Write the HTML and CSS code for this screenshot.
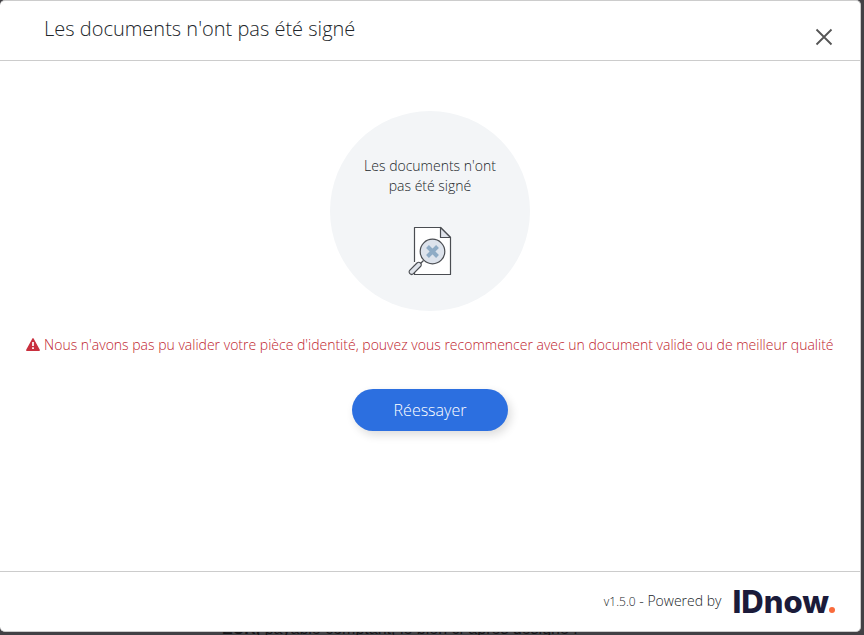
FILE: index.html
```html
<!DOCTYPE html>
<html lang="fr">
<head>
    <meta charset="UTF-8">
    <meta name="viewport" content="width=device-width, initial-scale=1.0">
    <title>Les documents n'ont pas été signé</title>
    <link rel="stylesheet" href="styles.css">
</head>
<body>
    <p class="page-text"><b>EUR,</b> payable comptant, le bien ci-après désigné :</p>
    <div class="modal" role="dialog" aria-labelledby="modal-title">
        <header class="modal-header">
            <h1 class="modal-title" id="modal-title">Les documents n'ont pas été signé</h1>
            <button class="modal-close" type="button" aria-label="Fermer">
                <svg width="18" height="18" viewBox="0 0 18 18" fill="none" stroke="#555" stroke-width="1.8">
                    <path d="M1.5 1.5l15 15M16.5 1.5l-15 15"/>
                </svg>
            </button>
        </header>
        <main class="modal-body">
            <div class="status">
                <p class="status-text">Les documents n'ont pas été signé</p>
                <svg class="status-icon" width="44" height="50" viewBox="0 0 44 50" stroke="#4a4d52" stroke-width="1.2" stroke-linejoin="round">
                    <path d="M6.5 1.5h26l10 10v37h-36z" fill="#fff"/>
                    <path d="M32.5 1.5v10h10z" fill="#dfe3ea"/>
                    <path d="M6.5 36v9" stroke="#fff" stroke-width="2"/>
                    <circle cx="24.5" cy="25.5" r="12.3" fill="#dde3ec"/>
                    <path d="M15.5 34.5l-3 3" fill="none"/>
                    <rect x="-2.5" y="0" width="5" height="15" rx="2.5" transform="translate(12.5 37) rotate(45)" fill="#dfe3ea"/>
                    <path d="M19.5 20.5l10 10M29.5 20.5l-10 10" stroke="#8eabc5" stroke-width="4" fill="none"/>
                </svg>
            </div>
            <p class="error">
                <svg class="error-icon" width="14" height="13" viewBox="0 0 14 13">
                    <path d="M7 0.8L13.2 12.2H0.8z" fill="#c9303e" stroke="#c9303e" stroke-width="1.4" stroke-linejoin="round"/>
                    <path d="M7 4v4M7 9.2v1.8" stroke="#fff" stroke-width="1.7"/>
                </svg>
                Nous n'avons pas pu valider votre pièce d'identité, pouvez vous recommencer avec un document valide ou de meilleur qualité
            </p>
            <button class="retry" type="button">Réessayer</button>
        </main>
        <footer class="modal-footer">
            <p class="powered"><small class="version">v1.5.0</small> - Powered by</p>
            <div class="logo">IDnow<span class="logo-dot"></span></div>
        </footer>
    </div>
</body>
</html>
```

FILE: styles.css
```css
* {
    margin: 0;
    padding: 0;
    box-sizing: border-box;
}

body {
    position: relative;
    display: flex;
    min-height: 100vh;
    padding: 0 3px 3px 0;
    overflow: hidden;
    background-color: #424145;
    font-family: "Open Sans", sans-serif;
    font-weight: 300;
    color: #212529;
}

/* page behind the modal */
.page-text {
    position: absolute;
    left: 222px;
    bottom: -4px;
    font-family: "Liberation Sans", sans-serif;
    font-size: 16px;
    font-weight: 400;
    line-height: 20px;
    color: #161518;
}

.modal {
    position: relative;
    display: flex;
    flex: 1;
    flex-direction: column;
    border: solid #ccc;
    border-width: 1px 1px 1px 0;
    border-radius: 5px;
    background-color: #fff;
}

.modal-header {
    display: flex;
    justify-content: space-between;
    height: 60px;
    padding: 14px 27px 0 44px;
    border-bottom: 1px solid #ccc;
}

.modal-title {
    font-size: 20px;
    font-weight: 300;
    line-height: 28px;
}

.modal-close {
    display: flex;
    align-self: flex-start;
    margin-top: 13px;
    border: none;
    background: none;
    cursor: pointer;
}

.modal-body {
    display: flex;
    flex: 1;
    flex-direction: column;
    align-items: center;
    padding: 50px 20px;
}

.status {
    display: flex;
    flex-direction: column;
    align-items: center;
    gap: 30px;
    width: 200px;
    height: 200px;
    padding: 45px 30px 0;
    border-radius: 50%;
    background-color: #f3f5f7;
    text-align: center;
}

.status-text {
    font-size: 14px;
    line-height: 20px;
}

.error {
    margin: 24px 0 34px;
    font-size: 14px;
    line-height: 20px;
    color: #c01d2e;
}

.error-icon {
    vertical-align: -1px;
}

.retry {
    width: 156px;
    height: 42px;
    border: none;
    border-radius: 21px;
    background-color: #2c6fe0;
    box-shadow: 3px 4px 10px rgba(0, 0, 0, 0.14);
    font: inherit;
    font-size: 16px;
    color: #fff;
    cursor: pointer;
}

.modal-footer {
    display: flex;
    align-items: center;
    justify-content: flex-end;
    gap: 11px;
    height: 60px;
    padding-right: 25px;
    border-top: 1px solid #ccc;
}

.powered {
    font-size: 14px;
    line-height: 20px;
}

.version {
    font-size: 12px;
}

.logo {
    display: flex;
    align-items: baseline;
    font-family: Inter, sans-serif;
    font-size: 31px;
    font-weight: 800;
    line-height: 36px;
    color: #1b1b3a;
}

.logo-dot {
    width: 6px;
    height: 6px;
    border-radius: 50%;
    background-color: #f96b3c;
}
```
